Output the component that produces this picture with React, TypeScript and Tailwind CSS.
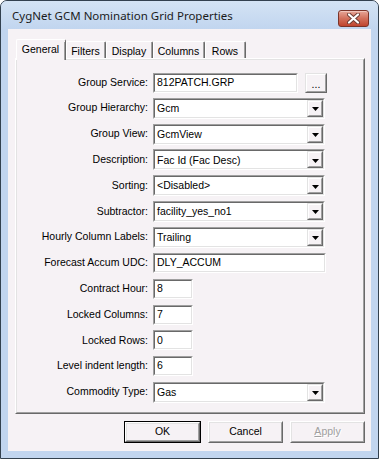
import React from 'react'

const rows: { label: string; kind: 'combo' | 'text' | 'small' | 'browse'; value: string }[] = [
  { label: 'Group Service:', kind: 'browse', value: '812PATCH.GRP' },
  { label: 'Group Hierarchy:', kind: 'combo', value: 'Gcm' },
  { label: 'Group View:', kind: 'combo', value: 'GcmView' },
  { label: 'Description:', kind: 'combo', value: 'Fac Id (Fac Desc)' },
  { label: 'Sorting:', kind: 'combo', value: '<Disabled>' },
  { label: 'Subtractor:', kind: 'combo', value: 'facility_yes_no1' },
  { label: 'Hourly Column Labels:', kind: 'combo', value: 'Trailing' },
  { label: 'Forecast Accum UDC:', kind: 'text', value: 'DLY_ACCUM' },
  { label: 'Contract Hour:', kind: 'small', value: '8' },
  { label: 'Locked Columns:', kind: 'small', value: '7' },
  { label: 'Locked Rows:', kind: 'small', value: '0' },
  { label: 'Level indent length:', kind: 'small', value: '6' },
  { label: 'Commodity Type:', kind: 'combo', value: 'Gas' },
]

const tabs = ['General', 'Filters', 'Display', 'Columns', 'Rows']
const tabWidths = ['w-[50px]', 'w-[40px]', 'w-[47px]', 'w-[52px]', 'w-[41px]']

function Sunken({ className, children }: { className: string; children: React.ReactNode }) {
  return (
    <div className={`${className} border border-t-[#a0a0a0] border-l-[#a0a0a0] border-b-white border-r-white`}>
      <div className="h-full border border-t-[#696969] border-l-[#696969] border-b-[#e3e3e3] border-r-[#e3e3e3] bg-white flex items-center">
        {children}
      </div>
    </div>
  )
}

function Raised({ className, children }: { className: string; children?: React.ReactNode }) {
  return (
    <div className={`${className} border border-t-[#e3e3e3] border-l-[#e3e3e3] border-b-[#696969] border-r-[#696969]`}>
      <div className="h-full border border-t-white border-l-white border-b-[#a0a0a0] border-r-[#a0a0a0] bg-[#f6f2f5] flex items-center justify-center">
        {children}
      </div>
    </div>
  )
}

function Combo({ value }: { value: string }) {
  return (
    <Sunken className="w-[172px] h-[21px]">
      <span className="flex-1 pl-[2px] text-[10.5px] leading-none">{value}</span>
      <Raised className="w-[16px] h-full">
        <svg width="7" height="4" viewBox="0 0 7 4" className="mt-[2px]">
          <polygon points="0,0 7,0 3.5,4" fill="#000" />
        </svg>
      </Raised>
    </Sunken>
  )
}

function Button({ label, def, disabled }: { label: string; def?: boolean; disabled?: boolean }) {
  const inner = (
    <div className="w-full h-full border border-t-white border-l-white border-b-[#696969] border-r-[#696969]">
      <div className="h-full border border-t-[#e3e3e3] border-l-[#e3e3e3] border-b-[#a0a0a0] border-r-[#a0a0a0] bg-[#f6f2f5] flex items-center justify-center text-[10.5px]">
        {disabled ? (
          <span className="text-[#a0a0a0] [text-shadow:1px_1px_0_#fff]">
            <span className="underline">A</span>pply
          </span>
        ) : (
          <span>{label}</span>
        )}
      </div>
    </div>
  )
  return def ? (
    <div className="w-[77px] h-[22px] border border-black">{inner}</div>
  ) : (
    <div className="w-[75px] h-[22px]">{inner}</div>
  )
}

export default function App() {
  return (
    <div className="w-[379px] h-[459px] bg-[#c1d5ef] border border-[#33414f] rounded-t-[7px] flex flex-col font-['Liberation_Sans',Arial,sans-serif] text-black">
      {/* title bar */}
      <div className="h-[28px] flex justify-between bg-gradient-to-b from-[#d4e3f4] to-[#c1d5ef] rounded-t-[6px]">
        <div className="pl-[11px] pt-[9px] text-[11.5px] leading-none font-['Noto_Sans',sans-serif] text-[#1b1b1b]">
          CygNet GCM Nomination Grid Properties
        </div>
        <div className="mt-[9px] mr-[9px] w-[31px] h-[17px] rounded-[3px] border border-[#7b3429] bg-gradient-to-b from-[#e6a698] via-[#d2705c] to-[#c0442e] flex items-center justify-center shadow-[inset_0_1px_0_#f1c4ba]">
          <svg width="13" height="11" viewBox="0 0 13 11">
            <path d="M2 1.5 L11 9.5 M11 1.5 L2 9.5" stroke="#6b3b33" strokeWidth="4" strokeLinecap="round" />
            <path d="M2 1.5 L11 9.5 M11 1.5 L2 9.5" stroke="#fff" strokeWidth="2.2" strokeLinecap="round" />
          </svg>
        </div>
      </div>

      {/* client area */}
      <div className="mx-[7px] h-[422px] bg-[#f6f2f5] flex flex-col pt-[10px]">
        {/* tabs */}
        <div className="h-[19px] flex items-end pl-[8px]">
          {tabs.map((t, i) =>
            i === 0 ? (
              <div
                key={t}
                className={`${tabWidths[i]} h-[21px] -mb-[2px] relative z-10 bg-[#f6f2f5] border-l border-t border-r border-l-white border-t-white border-r-[#696969] rounded-t-[2px] flex justify-center pt-[2px] text-[10.5px]`}
              >
                <div className="h-full w-full border-r border-r-[#a0a0a0] flex justify-center">{t}</div>
              </div>
            ) : (
              <div
                key={t}
                className={`${tabWidths[i]} h-[17px] border-l border-t border-r border-l-white border-t-white border-r-[#696969] rounded-t-[2px] text-[10.5px]`}
              >
                <div className="h-full border-r border-r-[#a0a0a0] flex justify-center pt-[2px]">{t}</div>
              </div>
            )
          )}
        </div>

        {/* panel */}
        <div className="ml-[7px] mr-[6px] h-[356px] border border-t-white border-l-white border-b-[#696969] border-r-[#696969]">
          <div className="h-full border border-t-[#e3e3e3] border-l-[#e3e3e3] border-b-[#a0a0a0] border-r-[#a0a0a0] pt-[12px] flex flex-col gap-[4.8px]">
            {rows.map((r) => (
              <div key={r.label} className="h-[21px] flex items-center gap-[5px]">
                <div className="w-[131px] text-right text-[10.5px]">{r.label}</div>
                {r.kind === 'combo' && <Combo value={r.value} />}
                {r.kind === 'text' && (
                  <Sunken className="w-[173px] h-[20px]">
                    <span className="pl-[2px] text-[10.5px]">{r.value}</span>
                  </Sunken>
                )}
                {r.kind === 'small' && (
                  <Sunken className="w-[40px] h-[20px]">
                    <span className="pl-[2px] text-[10.5px]">{r.value}</span>
                  </Sunken>
                )}
                {r.kind === 'browse' && (
                  <div className="flex items-center gap-[7px]">
                    <Sunken className="w-[145px] h-[20px]">
                      <span className="pl-[2px] text-[10.5px]">{r.value}</span>
                    </Sunken>
                    <Raised className="w-[22px] h-[20px]">
                      <span className="text-[10.5px] leading-none pt-[3px]">...</span>
                    </Raised>
                  </div>
                )}
              </div>
            ))}
          </div>
        </div>

        {/* buttons */}
        <div className="mt-[7px] mr-[6px] flex justify-end items-center gap-[7px]">
          <Button label="OK" def />
          <Button label="Cancel" />
          <Button label="Apply" disabled />
        </div>
      </div>
    </div>
  )
}
